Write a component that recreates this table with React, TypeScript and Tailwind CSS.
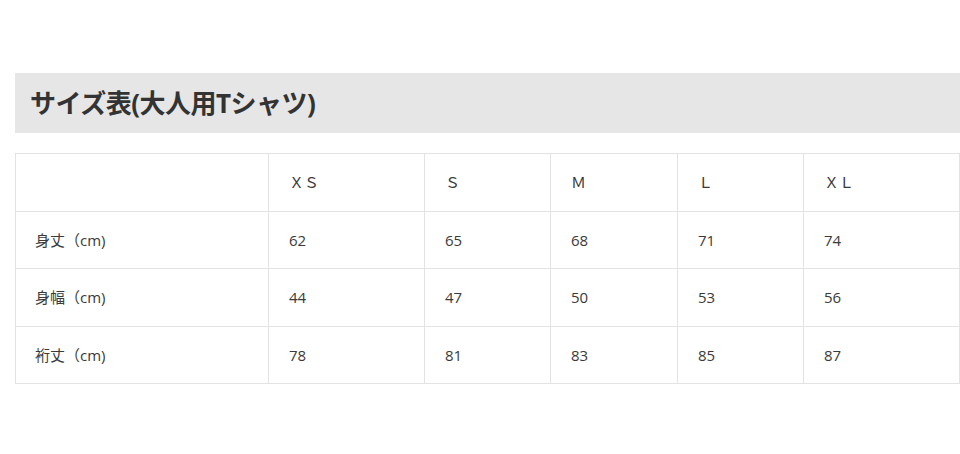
const sizes = ["ＸＳ", "Ｓ", "Ｍ", "Ｌ", "ＸＬ"];

const rows = [
  { label: "身丈（cm)", values: [62, 65, 68, 71, 74], h: "h-[57px]" },
  { label: "身幅（cm)", values: [44, 47, 50, 53, 56], h: "h-[58px]" },
  { label: "裄丈（cm)", values: [78, 81, 83, 85, 87], h: "h-[57px]" },
];

const widths = ["w-[253px]", "w-[156px]", "w-[126px]", "w-[127px]", "w-[126px]", "w-[156px]"];

export default function App() {
  return (
    <div
      className="w-[960px] h-[454px] bg-white text-[#3a3a3a] pt-[73px] pl-[15px]"
      style={{ fontFamily: '"Open Sans", "Noto Sans CJK JP", sans-serif' }}
    >
      <div className="h-[60px] bg-[#e6e6e6] flex items-center pl-[15px]">
        <h2 className="text-[26px] font-bold tracking-[-0.5px] text-[#333]">サイズ表(大人用Tシャツ)</h2>
      </div>
      <table className="mt-[20px] w-[944px] border-collapse table-fixed text-[15px]">
        <colgroup>
          {widths.map((w) => (
            <col key={w} className={w} />
          ))}
        </colgroup>
        <tbody>
          <tr className="h-[58px]">
            <td className="border border-[#e3e3e3] pl-5 pr-2"></td>
            {sizes.map((s) => (
              <td key={s} className="border border-[#e3e3e3] pl-5 pr-2">
                {s}
              </td>
            ))}
          </tr>
          {rows.map((row) => (
            <tr key={row.label} className={row.h}>
              <td className="border border-[#e3e3e3] pl-[19px] pr-2">{row.label}</td>
              {row.values.map((v, i) => (
                <td key={i} className="border border-[#e3e3e3] pl-5 pr-2">
                  {v}
                </td>
              ))}
            </tr>
          ))}
        </tbody>
      </table>
    </div>
  );
}
